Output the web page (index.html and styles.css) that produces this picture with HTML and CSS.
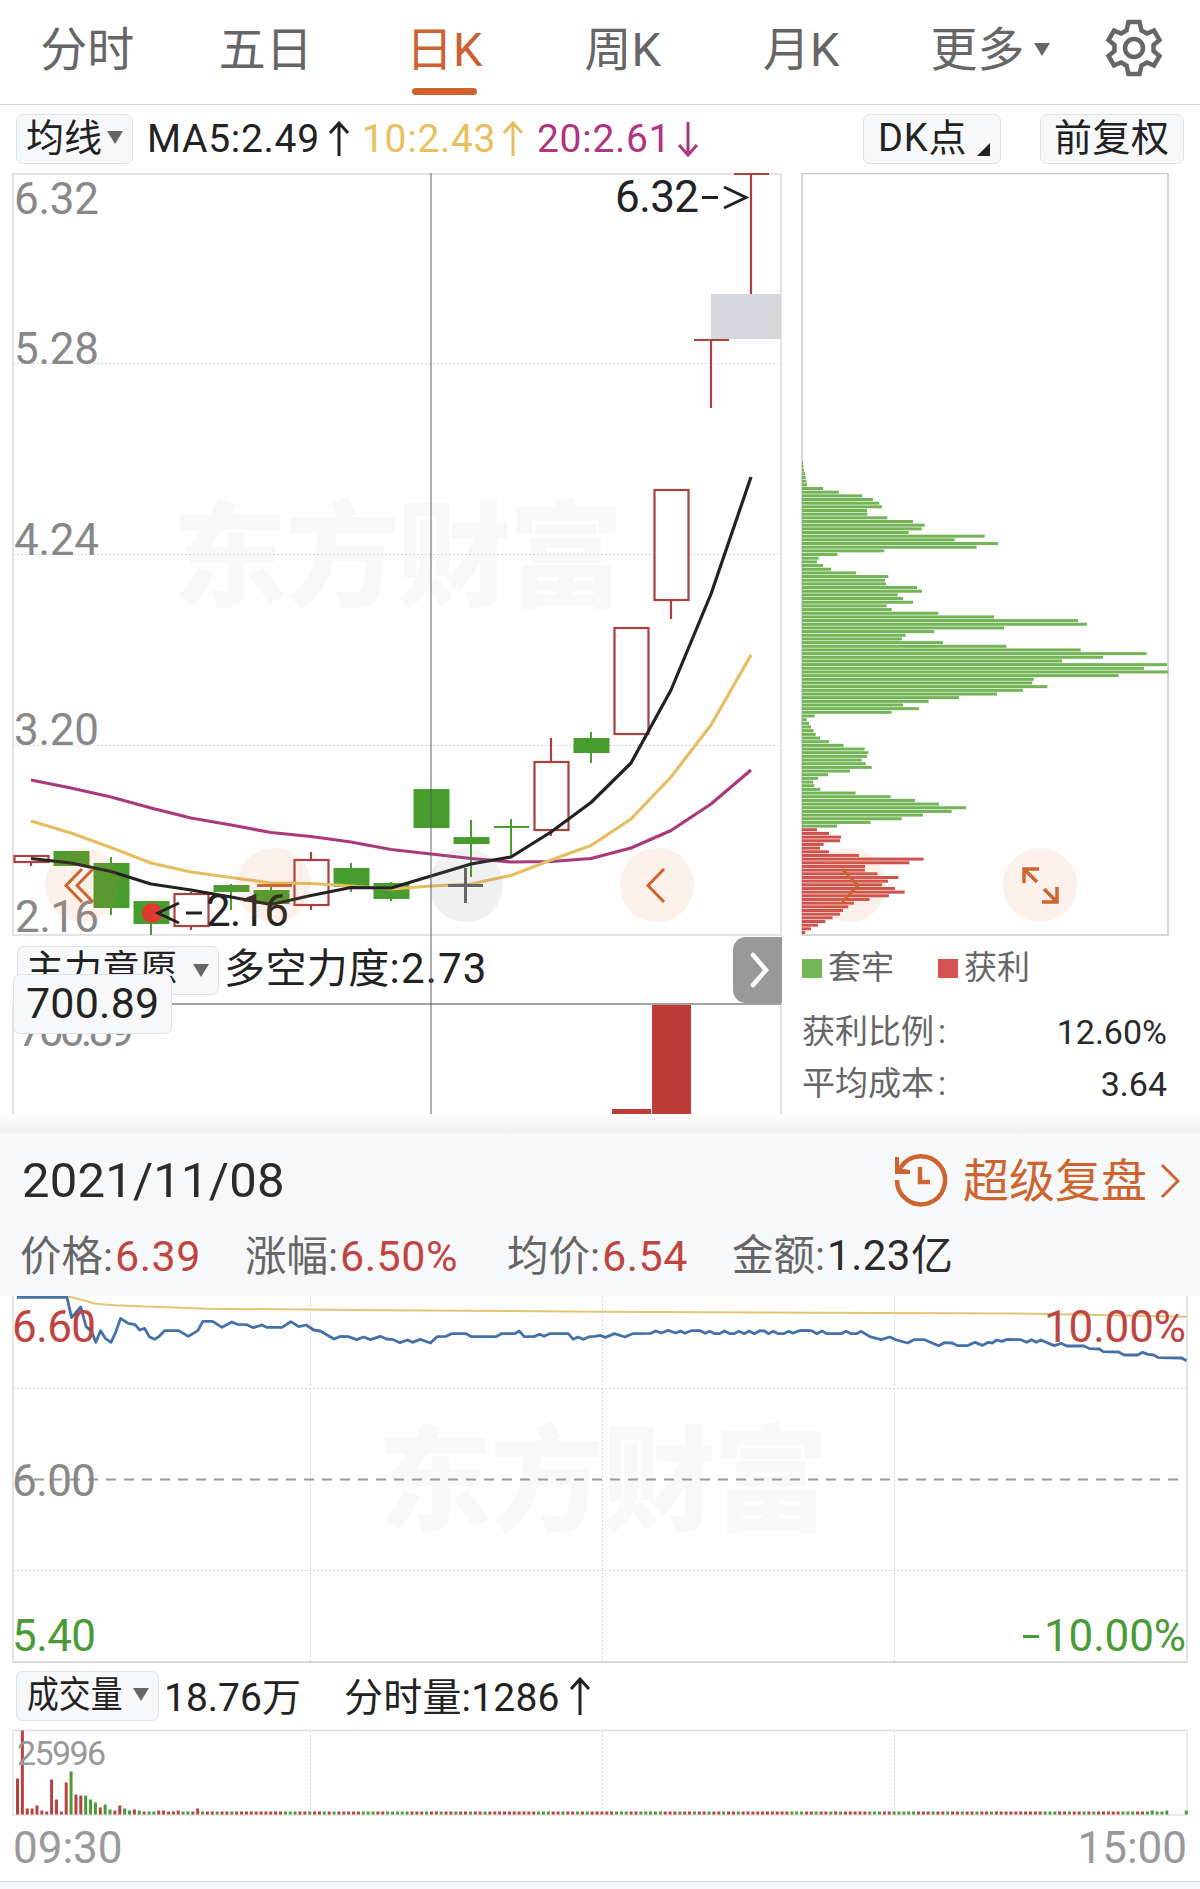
FILE: index.html
```
<!DOCTYPE html>
<html lang="zh-CN">

<head>
    <meta charset="UTF-8">
    <meta name="viewport" content="width=device-width, initial-scale=1.0">
    <title>日K</title>
    <link rel="stylesheet" href="styles.css">
</head>

<body>
    <nav class="tabs">
        <div class="tab">分时</div>
        <div class="tab">五日</div>
        <div class="tab active">日K</div>
        <div class="tab">周K</div>
        <div class="tab">月K</div>
        <div class="tab more">更多<i class="caret"></i></div>
        <svg class="gear" viewBox="-30 -30 60 60" width="60" height="60">
            <path d="M-5.5 -26H5.5L7.5 -17.5L13 -14.5L20 -17.5L25.5 -8L19.5 -3V3L25.5 8L20 17.5L13 14.5L7.5 17.5L5.5 26H-5.5L-7.5 17.5L-13 14.5L-20 17.5L-25.5 8L-19.5 3V-3L-25.5 -8L-20 -17.5L-13 -14.5L-7.5 -17.5Z" />
            <circle r="9" />
        </svg>
    </nav>

    <div class="ma-row">
        <div class="pill ma-select">均线<i class="caret"></i></div>
        <span class="ma ma5">MA5:2.49</span>
        <svg class="arrow ma5" viewBox="0 0 22 36" width="22" height="36"><path d="M11 35V2M2 12L11 2L20 12" /></svg>
        <span class="ma ma10">10:2.43</span>
        <svg class="arrow ma10" viewBox="0 0 22 36" width="22" height="36"><path d="M11 35V2M2 12L11 2L20 12" /></svg>
        <span class="ma ma20">20:2.61</span>
        <svg class="arrow ma20" viewBox="0 0 22 36" width="22" height="36"><path d="M11 1V34M2 24L11 34L20 24" /></svg>
        <div class="pill dk">DK点<i class="corner"></i></div>
        <div class="pill fq">前复权</div>
    </div>

    <div class="main">
        <div class="kline">
            <svg class="chart" viewBox="0 173 782 764" width="782" height="764">
                <text class="watermark" x="173" y="597" textLength="450">东方财富</text>
                <path class="grid" d="M13 363.5H781M13 554.5H781M13 745.5H781" />
                <path class="frame" d="M13 174H781V935H13Z" />
                <g class="axis">
                    <text x="14" y="214" textLength="85">6.32</text>
                    <text x="14" y="364" textLength="85">5.28</text>
                    <text x="14" y="555" textLength="85">4.24</text>
                    <text x="14" y="745" textLength="85">3.20</text>
                    <text x="15" y="932" textLength="84">2.16</text>
                </g>
                <rect class="gap" x="711" y="294" width="70" height="45" />
                <g id="candles"></g>
                <polyline class="line ma20" points="31,780 71,788 111,797 151,808 191,818 231,825 271,832.5 311,836.5 351,842 391,849.5 431,854 471,858.5 511,862 551,861.5 591,858.5 631,848 671,830.5 711,804 751,770" />
                <polyline class="line ma10" points="31,821 71,833 111,847.5 151,863 191,872 231,877.5 271,883 311,883.5 351,886 391,889 431,886 471,884 511,875.5 551,860 591,845.5 631,819 671,777 711,725 751,655" />
                <polyline class="line ma5" points="31,858.5 71,863 111,871.5 151,884 191,890 231,897 271,904.5 311,895.5 351,887.5 391,888 431,876 471,864 511,857 551,832 591,802.5 631,763 671,690 711,594 751,477" />
                <g class="peak">
                    <text x="615" y="212" textLength="84">6.32</text>
                    <path d="M702 197.500H718M724 187L746 197.500L724 208" />
                    <circle class="dot" cx="152" cy="913" r="10" />
                    <path d="M179 903L158 913L179 923M186 913H202" />
                    <text x="206" y="926" textLength="83">2.16</text>
                </g>
                <g class="tools">
                    <circle cx="82" cy="885" r="37" />
                    <circle cx="274" cy="885" r="37" />
                    <circle class="gray" cx="466" cy="885" r="37" />
                    <circle cx="657" cy="885" r="37" />
                    <path d="M82 869L66 885.500L82 902M93 869L77 885.500L93 902M257 885.500H292M664 869L648 885.500L664 902" />
                    <path class="plus" d="M448 885.500H483M465.500 868V903" />
                </g>
            </svg>
            <div class="force-row">
                <div class="pill force-select">主力意愿<i class="caret"></i></div>
                <span class="force">多空力度<b>:2.73</b></span>
                <div class="next"><svg viewBox="0 0 20 36" width="20" height="36"><path d="M3 3L16 18L3 33" /></svg></div>
            </div>
            <svg class="chart" viewBox="0 1003 782 111" width="782" height="111">
                <path class="frame" d="M13 1003V1114M781 1003V1114" />
                <text class="axis" x="18" y="1046" textLength="116">700.89</text>
                <path class="bar-red" d="M612 1109H651V1114H612ZM652 1004H691V1114H652Z" />
                <path class="cross-line" d="M13 1004H781" />
            </svg>
            <div class="cross-x"></div>
            <div class="pill cross-value">700.89</div>
        </div>

        <div class="chips">
            <svg class="chart" viewBox="801 173 380 764" width="380" height="764">
                <path class="chip-frame" d="M802 173.500H1168V935H802Z" />
                <g id="chips"></g>
                <g class="tools">
                    <circle cx="849" cy="885" r="37" />
                    <circle cx="1040" cy="885" r="37" />
                    <path d="M842 869L858 885.500L842 902" />
                    <path class="expand" d="M1024 883V869H1039M1025 870L1037 882M1044 889L1056 901M1057 887V902H1042" />
                </g>
            </svg>
            <div class="legend">
                <i class="box green"></i><span>套牢</span>
                <i class="box red"></i><span>获利</span>
            </div>
            <div class="stat"><span>获利比例<b>:</b></span><em>12.60%</em></div>
            <div class="stat"><span>平均成本<b>:</b></span><em>3.64</em></div>
        </div>
    </div>

    <div class="shade"></div>
    <div class="day">
        <div class="day-head">
            <span class="date">2021/11/08</span>
            <svg class="history" viewBox="0 0 56 56" width="56" height="56">
                <path d="M4 28A24 24 0 1 0 8 15M27 15V30H37" />
                <path class="solid" d="M2 5V22H17V18L10 17L6 13V5Z" />
            </svg>
            <span class="replay">超级复盘</span>
            <svg class="go" viewBox="0 0 20 36" width="20" height="36"><path d="M2 2L18 18L2 34" /></svg>
        </div>
        <div class="quote">
            <span>价格:<b>6.39</b></span>
            <span>涨幅:<b>6.50%</b></span>
            <span>均价:<b>6.54</b></span>
            <span>金额:<em>1.23亿</em></span>
        </div>
    </div>

    <svg class="chart" viewBox="0 1296 1200 368" width="1200" height="368">
        <text class="watermark" x="378" y="1521" textLength="450">东方财富</text>
        <path class="grid" d="M13 1388.500H1187M13 1570.500H1187M310.500 1296V1661M602.500 1296V1661M894.500 1296V1661" />
        <path class="frame" d="M13 1296V1662M1187 1296V1662" />
        <path class="frame dark" d="M12 1662H1188" />
        <path class="mid" d="M16 1479.500H1186" />
        <g class="minute" transform="translate(0 1110) scale(.38265 .33333)">
            <polyline class="avg" points="175,558 215,570 250,581 300,586 400,590 540,596 1000,601 1568,605 2300,609 2700,611 3101,620" />
            <polyline class="price" points="44,562 175,562 187,623 211,591 225,650 240,665 250,697 263,662 275,685 290,697 302,668 315,625 335,640 353,644 365,660 378,655 390,680 404,688 415,680 430,662 467,662 492,679 517,662 530,634 556,634 580,652 606,636 620,643 645,644 662,653 684,645 697,652 737,652 760,635 781,650 800,645 820,660 837,663 873,687 890,679 910,680 932,689 950,681 968,689 994,679 1010,687 1028,689 1045,698 1065,690 1078,697 1098,688 1125,699 1142,680 1166,679 1180,671 1218,671 1232,680 1296,680 1310,671 1345,671 1357,663 1370,680 1395,680 1410,673 1422,679 1436,671 1485,671 1498,688 1510,681 1525,688 1540,680 1555,679 1568,676 1582,682 1606,671 1633,681 1653,671 1701,670 1714,663 1728,669 1746,661 1766,669 1778,663 1790,670 1806,662 1830,662 1843,670 1855,664 1868,671 1880,671 1893,663 1908,671 1918,671 1931,664 1945,671 1958,663 1971,671 1986,662 1998,663 2008,671 2021,664 2034,671 2048,671 2061,664 2072,670 2086,663 2098,661 2121,662 2135,671 2148,663 2161,671 2198,671 2211,664 2224,671 2238,671 2251,664 2273,680 2303,689 2325,681 2343,690 2372,699 2388,689 2416,689 2453,707 2468,698 2488,699 2503,707 2528,707 2548,697 2568,706 2583,697 2593,699 2605,690 2618,694 2633,688 2668,689 2683,697 2696,689 2708,697 2720,690 2755,707 2773,700 2788,708 2833,708 2848,716 2873,717 2883,725 2923,726 2938,735 2973,735 2986,727 3000,733 3015,735 3028,743 3088,744 3101,752" />
        </g>
        <g class="axis">
            <text class="up" x="12" y="1342" textLength="84">6.60</text>
            <text x="12" y="1496" textLength="84">6.00</text>
            <text class="down" x="12" y="1651" textLength="84">5.40</text>
            <text class="up" x="1044" y="1342" textLength="142">10.00%</text>
            <text class="down" x="1044" y="1651" textLength="142">10.00%</text>
            <path class="minus" d="M1023 1636.500H1039" />
        </g>
    </svg>

    <div class="vol-row">
        <div class="pill vol-select"><span>成交量</span><i class="caret"></i></div>
        <span class="vol">18.76万</span>
        <span class="vol now">分时量:1286</span>
        <svg class="arrow" viewBox="0 0 22 38" width="22" height="38"><path d="M11 38V2M2 12L11 2L20 12" /></svg>
    </div>

    <svg class="chart" viewBox="0 1729 1200 88" width="1200" height="88">
        <path class="grid" d="M310.500 1731V1814M602.500 1731V1814M894.500 1731V1814" />
        <path class="frame thin" d="M13 1730.500H1187V1815H13Z" />
        <g id="volume"></g>
        <text class="axis small" x="17" y="1765" textLength="89">25996</text>
    </svg>
    <div class="times"><span>09:30</span><span>15:00</span></div>
    <div class="footer"></div>

    <script src="chart.js"></script>
</body>

</html>
```

FILE: styles.css
```
* {
    margin: 0;
    padding: 0;
    box-sizing: border-box;
}

body {
    width: 1200px;
    background: #fefefe;
    color: #222;
    font-family: Roboto, "Noto Sans CJK SC", sans-serif;
    overflow-x: hidden;
}

svg {
    display: block;
    fill: none;
    flex: none;
}

i,
em,
b {
    font-style: normal;
    font-weight: normal;
}

.tabs {
    display: flex;
    height: 105px;
    border-bottom: 1px solid #d3d6d8;
    font-size: 47px;
    line-height: 99px;
    color: #666;
}

.tab {
    width: 178.5px;
    text-align: center;
    position: relative;
    left: -2px;
    flex: none;
}

.tab.active {
    color: #cc6230;
}

.tab.active::after {
    content: "";
    position: absolute;
    left: 57px;
    bottom: 9px;
    width: 65px;
    height: 7px;
    border-radius: 4px;
    background: #d0622d;
}

.tab.more {
    display: flex;
    align-items: center;
    left: 0;
    width: 173px;
    height: 98px;
    margin-left: 38px;
}

.caret {
    border: 8px solid transparent;
    border-top: 13px solid #666;
    border-bottom: 0;
}

.more .caret {
    margin-left: 9px;
}

.gear {
    margin: 18px 0 0;
    stroke: #666;
    stroke-width: 4.500;
}

.pill {
    display: flex;
    align-items: center;
    height: 50px;
    border: 1px solid #dfe2e5;
    border-radius: 7px;
    background: #f7f8fa;
    font-size: 38px;
    line-height: 46px;
    padding-bottom: 3px;
    white-space: nowrap;
    flex: none;
}

.ma-row {
    display: flex;
    align-items: center;
    height: 68px;
    padding-left: 16px;
    font-size: 39px;
}

.ma-select {
    width: 117px;
    padding-left: 9px;
}

.ma-select .caret {
    margin-left: 5px;
}

.ma {
    flex: none;
    white-space: nowrap;
    letter-spacing: .7px;
}

span.ma5 {
    margin-left: 14px;
    width: 181px;
}

span.ma10 {
    margin-left: 12px;
    width: 140px;
}

span.ma20 {
    margin-left: 13px;
    width: 140px;
}

.arrow {
    stroke: #222;
    stroke-width: 3;
}

.ma5 {
    color: #222;
    stroke: #222;
}

.ma10 {
    color: #e8c060;
    stroke: #e5be62;
}

.ma20 {
    color: #b03480;
    stroke: #a83a7c;
}

span.ma {
    stroke: none;
}

.dk {
    width: 138px;
    margin-left: 164px;
    padding-left: 14px;
    letter-spacing: .8px;
}

.corner {
    margin: 24px 0 0 10px;
    border-left: 13px solid transparent;
    border-bottom: 13px solid #222;
}

.fq {
    width: 144px;
    margin-left: 39px;
    padding-left: 13px;
    letter-spacing: .5px;
}

.main {
    display: flex;
    height: 941px;
}

.kline {
    position: relative;
    width: 782px;
    margin-right: 19px;
}

.chart text {
    fill: #888;
    font-size: 44px;
}

.chart .watermark {
    font-size: 114px;
    font-weight: 900;
    fill: #f8f8f8;
}

.grid {
    stroke: #d9d9d9;
    stroke-dasharray: 2 2;
}

.frame {
    stroke: #e3e3e3;
    stroke-width: 2;
}

.frame.dark {
    stroke: #d8d8d8;
}

.frame.thin {
    stroke-width: 1.500;
}

.gap {
    fill: #d5d7dc;
}

.red {
    fill: #fefefe;
    stroke: #a9423e;
    stroke-width: 2.200;
}

.green {
    fill: #489d2e;
    stroke: #489d2e;
    stroke-width: 2;
}

.line {
    stroke-width: 3.200;
    stroke-linejoin: round;
}

.chart .peak text {
    fill: #222;
}

.peak path {
    stroke: #222;
    stroke-width: 3;
}

.dot {
    fill: #e03a30;
}

.tools circle {
    fill: #e8834a;
    fill-opacity: .11;
}

.tools circle.gray {
    fill: #777;
    fill-opacity: .1;
}

.tools path {
    stroke: #cc6530;
    stroke-width: 3;
}

.tools .plus {
    stroke: #666;
}

.tools .expand {
    stroke-width: 3.500;
}

.force-row {
    display: flex;
    height: 66px;
    padding-left: 17px;
}

.force-select {
    width: 202px;
    height: 49px;
    margin-top: 9px;
    padding-left: 8px;
}

.force-select .caret {
    margin: 3px 0 0 15px;
}

.force {
    width: 514px;
    padding-left: 5px;
    font-size: 41px;
    line-height: 64px;
    letter-spacing: .4px;
}

.force b {
    font-size: 42px;
    letter-spacing: 1.2px;
}

.next {
    display: flex;
    align-items: center;
    width: 49px;
    height: 66px;
    padding-left: 17px;
    border-radius: 13px 0 0 13px;
    background: #999;
}

.next svg {
    stroke: #fff;
    stroke-width: 4.500;
    stroke-linecap: round;
}

.cross-x {
    position: absolute;
    left: 430px;
    top: 0;
    width: 2px;
    height: 941px;
    background: rgba(90, 90, 90, .48);
}

.cross-line {
    stroke: #a2a2a2;
    stroke-width: 2;
}

.cross-value {
    position: absolute;
    left: 13px;
    top: 801px;
    width: 159px;
    height: 60px;
    padding-left: 12px;
    font-size: 43px;
    letter-spacing: .2px;
}

.bar-red {
    fill: #bf3b36;
}

.chip-frame {
    stroke: #c9c9c9;
    stroke-width: 1.500;
}

.chips {
    width: 380px;
    color: #666;
    font-size: 33px;
}

.legend {
    display: flex;
    align-items: center;
    height: 62px;
}

.box {
    width: 20px;
    height: 19px;
    margin: 1px 6px 0 1px;
}

.legend .green {
    background: #74b656;
}

.legend .red {
    margin-left: 44px;
    background: #d6544f;
}

.legend span {
    line-height: 60px;
}

.stat {
    display: flex;
    justify-content: space-between;
    width: 366px;
    height: 52px;
    padding-left: 1px;
    line-height: 66px;
}

.stat b {
    margin-left: 4px;
}

.stat em {
    color: #2a2a2a;
    font-size: 34px;
}

.shade {
    height: 19px;
    background: linear-gradient(#fefefe, #f1f1f1);
}

.day {
    height: 163px;
    background: #f7f8fa;
}

.day-head {
    display: flex;
    align-items: center;
    height: 95px;
    color: #cc6530;
}

.date {
    width: 893px;
    padding-left: 22px;
    font-size: 49px;
    letter-spacing: .2px;
    color: #2b2b2b;
}

.history {
    margin-bottom: 2px;
    stroke: #cc6530;
    stroke-width: 4.500;
}

.history .solid {
    fill: #cc6530;
    stroke: none;
}

.replay {
    width: 196px;
    margin-left: 14px;
    margin-right: 1px;
    font-size: 46px;
    line-height: 66px;
    white-space: nowrap;
}

.go {
    stroke: #cc6530;
    stroke-width: 3;
}

.quote {
    display: flex;
    padding-left: 20px;
    font-size: 41.500px;
    line-height: 56px;
    color: #666;
}

.quote span {
    width: 225px;
    white-space: nowrap;
}

.quote span:nth-child(2) {
    width: 262px;
}

.quote b,
.quote em {
    margin-left: 2px;
    font-size: 43px;
    letter-spacing: .5px;
    color: #c04540;
}

.quote em {
    font-size: 42px;
    color: #2b2b2b;
}

.mid {
    stroke: #999;
    stroke-width: 2;
    stroke-dasharray: 10 8;
}

.minute polyline {
    vector-effect: non-scaling-stroke;
    stroke-linejoin: round;
}

.avg {
    stroke: #e3c672;
    stroke-width: 2;
}

.price {
    stroke: #4371a8;
    stroke-width: 2.800;
}

.chart .up {
    fill: #c04540;
}

.chart .down {
    fill: #4b9a38;
}

.minus {
    stroke: #4b9a38;
    stroke-width: 3;
}

.chart .small {
    font-size: 34px;
    fill: #999;
}

.vol-row {
    display: flex;
    align-items: center;
    height: 65px;
    padding: 0 0 2px 16px;
    font-size: 39px;
}

.vol-select {
    width: 143px;
    padding-left: 10px;
}

.vol-select span {
    width: 96px;
    padding-top: 3px;
    font-size: 37px;
    transform: scaleX(.86);
    transform-origin: left;
}

.vol-select .caret {
    margin-left: 10px;
}

.vol {
    width: 180px;
    padding-left: 5px;
    margin-bottom: 4px;
    white-space: nowrap;
}

.vol.now {
    width: 230px;
    letter-spacing: .2px;
}

.times {
    display: flex;
    justify-content: space-between;
    height: 64px;
    padding: 0 13px;
    font-size: 44px;
    line-height: 63px;
    color: #999;
}

.footer {
    height: 8px;
    border-top: 1px solid #d3d6d8;
    background: #f7f8fa;
}
```

FILE: chart.js
```
const NS = 'http://www.w3.org/2000/svg';

function draw(parent, name, attrs) {
    const el = document.createElementNS(NS, name);
    for (const key in attrs) el.setAttribute(key, attrs[key]);
    parent.appendChild(el);
}

// [color, body top, body bottom, wick top, wick bottom]
const candles = [
    ['red', 855, 863, 855, 866], ['green', 851, 866, 851, 866], ['green', 863, 908, 857, 915],
    ['green', 901, 924, 901, 935], ['red', 893, 927, 892, 930], ['green', 885, 892, 884, 910],
    ['green', 890, 904, 887, 917], ['red', 859, 906, 852, 910], ['green', 868, 887, 863, 892],
    ['green', 883, 899, 882, 901], ['green', 789, 828, 789, 828], ['green', 837, 844, 820, 877],
    ['green', 827, 827, 819, 857], ['red', 761, 831, 738, 836], ['green', 738, 753, 732, 763],
    ['red', 627, 735, 627, 735], ['red', 489, 601, 601, 619], ['red', 340, 340, 340, 408],
    ['red', 174, 174, 174, 294]
];
const candleBox = document.getElementById('candles');
candles.forEach(([color, top, bottom, high, low], i) => {
    const x = 31 + i * 40;
    draw(candleBox, 'path', { class: color, d: `M${x} ${high}V${low}` });
    if (top === bottom) {
        draw(candleBox, 'path', { class: color, d: `M${x - 17} ${top}H${x + 18}` });
    } else {
        draw(candleBox, 'rect', { class: color, x: x - 16.5, y: top + 1, width: 34, height: bottom - top - 2 });
    }
});

// Chip distribution, in thirds of a pixel
const trapped = [3, 4, 6, 9, 11, 13, 15, 63, 111, 180, 213, 232, 240, 195, 196, 256, 333, 368, 359, 320, 548, 458, 588, 524, 247,
    106, 50, 45, 63, 87, 162, 259, 249, 252, 345, 360, 287, 303, 333, 254, 269, 409, 576, 828, 855, 606, 396, 311, 300, 423,
    613, 836, 1034, 903, 780, 1095, 1026, 1099, 950, 695, 690, 736, 663, 585, 471, 380, 303, 351, 269, 38, 14, 21, 27, 35, 41,
    54, 81, 125, 188, 199, 195, 179, 191, 209, 144, 78, 48, 33, 37, 55, 161, 266, 339, 411, 492, 449, 363, 299, 206, 105];
const profit = [45, 81, 117, 114, 65, 54, 81, 171, 365, 322, 189, 189, 227, 289, 258, 240, 279, 308, 261, 203, 156, 139, 123,
    114, 92, 70, 48, 27, 10];
const chipBox = document.getElementById('chips');
const all = trapped.concat(profit);
const step = 469.7 / (all.length - 1);
all.forEach((w, i) => {
    draw(chipBox, 'rect', {
        x: 802, y: 461.300 + i * step, width: w / 3, height: 3,
        fill: i < trapped.length ? '#72b456' : '#cf514d'
    });
});

// Minute volume, r = up, g = down
const first = 'r36 r84 r6 r6 r9 r4 r3 r35 r15 r3 r32 g43 r20 r19 g19 g15 g12 r7 g10 g5 r4 r9 g6 g4 r5 g4 r3 g3 g3 r4 r4 r3 r3 r4 g3 g3 r3 r6'.split(' ');
const pattern = 'rrrgggrrgrrgrgrrrrrgggrrgggggrrrgrrgrrgrrgrrgrrrrrrr';
const volumeBox = document.getElementById('volume');
for (let i = 0; i < 241; i++) {
    if (i > 236 && i < 240) continue;
    let color = pattern[i % pattern.length];
    let h = 3;
    if (i < first.length) {
        color = first[i][0];
        h = Number(first[i].slice(1));
    }
    if (i === 233 || i === 236) h = 4;
    if (i === 240) {
        color = 'g';
        h = 4;
    }
    draw(volumeBox, 'rect', {
        x: 16 + i * 4.87, y: 1814.500 - h, width: 3, height: h,
        fill: color === 'r' ? '#b5433f' : '#4b9a38'
    });
}
```
